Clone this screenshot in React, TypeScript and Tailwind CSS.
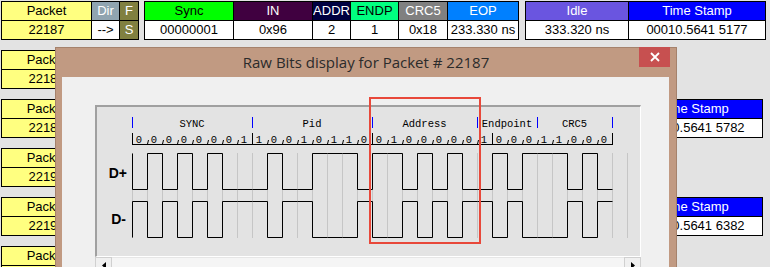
import React from "react";

type Col = { label: string; value: string; w: string; head: string; cell?: string };

const packetCols: Col[] = [
  { label: "Packet", value: "22187", w: "w-[89px]", head: "bg-[#ffff80] text-black", cell: "bg-[#ffff80] text-black" },
  { label: "Dir", value: "-->", w: "w-[27px]", head: "bg-[#90a4b0] text-white" },
  { label: "F", value: "S", w: "w-[18px]", head: "bg-[#808040] text-white", cell: "bg-[#808040] text-white" },
];

const tokenCols: Col[] = [
  { label: "Sync", value: "00000001", w: "w-[88px]", head: "bg-[#00ff00] text-black" },
  { label: "IN", value: "0x96", w: "w-[78px]", head: "bg-[#400040] text-white" },
  { label: "ADDR", value: "2", w: "w-[37px]", head: "bg-[#000040] text-white" },
  { label: "ENDP", value: "1", w: "w-[47px]", head: "bg-[#00ff80] text-black" },
  { label: "CRC5", value: "0x18", w: "w-[48px]", head: "bg-[#808080] text-white" },
  { label: "EOP", value: "233.330 ns", w: "w-[70px]", head: "bg-[#0080ff] text-white" },
];

const idleCols: Col[] = [
  { label: "Idle", value: "333.320 ns", w: "w-[102px]", head: "bg-[#6a55e0] text-white" },
  { label: "Time Stamp", value: "00010.5641 5177", w: "w-[136px]", head: "bg-[#0000ff] text-white" },
];

const lowerRows = [
  { packet: "22188" },
  { packet: "22189", stamp: "00010.5641 5782" },
  { packet: "22190" },
  { packet: "22191", stamp: "00010.5641 6382" },
  { packet: "22192" },
];

// bits as shown in the dialog, LSB first
const bits = [0, 0, 0, 0, 0, 0, 0, 1, 1, 0, 0, 1, 0, 1, 1, 0, 0, 1, 0, 0, 0, 0, 0, 1, 0, 0, 0, 1, 1, 0, 0, 0];
const X0 = 132;
const STEP = 15;
const fields = [
  { name: "SYNC", from: 0, to: 8 },
  { name: "Pid", from: 8, to: 16 },
  { name: "Address", from: 16, to: 23 },
  { name: "Endpoint", from: 23, to: 27 },
  { name: "CRC5", from: 27, to: 32 },
];

function Table({ cols }: { cols: Col[] }) {
  return (
    <div className="flex gap-px border border-black bg-black text-[13px] leading-[18px]">
      {cols.map((c) => (
        <div key={c.label} className={`flex flex-col gap-px ${c.w}`}>
          <div className={`h-[18px] overflow-hidden whitespace-nowrap text-center ${c.head}`}>{c.label}</div>
          <div className={`h-[18px] overflow-hidden whitespace-nowrap text-center ${c.cell ?? "bg-white text-black"}`}>
            {c.value}
          </div>
        </div>
      ))}
    </div>
  );
}

function levels() {
  let lvl = 1;
  return bits.map((b) => {
    if (b === 0) lvl = 1 - lvl;
    return lvl;
  });
}

function wavePath(hi: number, lo: number, invert: boolean) {
  const lv = levels();
  const y = (l: number) => ((invert ? 1 - l : l) ? hi : lo);
  let d = `M ${X0 + 0.5} ${invert ? lo : hi}`;
  lv.forEach((l, i) => {
    const x1 = X0 + STEP * i + 0.5;
    const x2 = X0 + STEP * (i + 1) + 0.5;
    d += ` L ${x1} ${y(l)} L ${x2} ${y(l)}`;
  });
  return d;
}

function BitGraph() {
  const mono = "'Liberation Mono', monospace";
  return (
    <svg width="543" height="149" viewBox="97 107 543 149" className="block">
      {Array.from({ length: 34 }, (_, k) => (
        <line key={k} x1={X0 + STEP * k + 0.5} x2={X0 + STEP * k + 0.5} y1={153} y2={238} stroke="#c6c6c6" />
      ))}
      {[X0, 252, 372, 477, 537, 612].map((x) => (
        <line key={x} x1={x + 0.5} x2={x + 0.5} y1={117} y2={128} stroke="#0000ff" />
      ))}
      {fields.map((f) => (
        <text
          key={f.name}
          x={X0 + ((f.from + f.to) / 2) * STEP}
          y={127}
          textAnchor="middle"
          fontSize="10.5"
          fontFamily={mono}
          fill="#000"
        >
          {f.name}
        </text>
      ))}
      <line x1={X0} x2={613} y1={144.5} y2={144.5} stroke="#000" />
      {Array.from({ length: 33 }, (_, i) => {
        const x = X0 + STEP * i + 0.5;
        const tall = i % 8 === 0;
        return <line key={i} x1={tall ? x : x + 1} x2={x} y1={tall ? 133 : 140} y2={144} stroke="#000" />;
      })}
      {bits.map((b, i) => (
        <text key={i} x={X0 + STEP * i + 7} y={143} textAnchor="middle" fontSize="10.5" fontFamily={mono} fill="#000">
          {b}
        </text>
      ))}
      <path d={wavePath(153.5, 189.5, false)} fill="none" stroke="#000" />
      <path d={wavePath(201.5, 237.5, true)} fill="none" stroke="#000" />
      <text x={127} y={178} textAnchor="end" fontSize="14" fontWeight="bold" fontFamily="'Liberation Sans', sans-serif">
        D+
      </text>
      <text x={126} y={223.5} textAnchor="end" fontSize="14" fontWeight="bold" fontFamily="'Liberation Sans', sans-serif">
        D-
      </text>
    </svg>
  );
}

function Arrow({ left }: { left?: boolean }) {
  return (
    <div className="flex h-[17px] w-[17px] items-center justify-center border border-[#d0d0d0] bg-[#f0f0f0]">
      <svg width="4" height="7" viewBox="0 0 4 7">
        <polygon points={left ? "4,0 4,7 0,3.5" : "0,0 0,7 4,3.5"} fill="#000" />
      </svg>
    </div>
  );
}

function Dialog() {
  return (
    <div className="absolute left-[55px] top-[47px] flex h-[240px] w-[622px] flex-col border border-[#a5826c] bg-[#c19a82]">
      <div className="relative flex h-[29px] items-center justify-center font-['Open_Sans',sans-serif] text-[15px] text-[#2b2b2b]">
        Raw Bits display for Packet # 22187
        <div className="absolute right-[6px] top-[-1px] flex h-[20px] w-[31px] items-center justify-center bg-[#c75050]">
          <svg width="10" height="10" viewBox="0 0 10 10">
            <path d="M1 1 L9 9 M9 1 L1 9" stroke="#fff" strokeWidth="1.8" />
          </svg>
        </div>
      </div>
      <div className="relative ml-[6px] mr-[7px] flex-1 bg-[#f0f0f0]">
        <div className="ml-[33px] mt-[28px] w-[546px]">
          <div className="border-b border-l-2 border-r border-t-2 border-b-white border-l-[#a0a0a0] border-r-white border-t-[#a0a0a0] bg-[#e3e3e3]">
            <BitGraph />
          </div>
          <div className="flex bg-[#f0f0f0]">
            <Arrow left />
            <div className="h-[17px] flex-1 border-y border-[#e6e6e6] bg-[#f5f5f5]" />
            <Arrow />
          </div>
        </div>
        <div className="absolute left-[307px] top-[20px] h-[147px] w-[112px] border-2 border-[#e8483a]" />
      </div>
    </div>
  );
}

export default function App() {
  return (
    <div className="relative h-[267px] w-[770px] overflow-hidden bg-[#e3e3e3] font-['Liberation_Sans',Arial,sans-serif]">
      <div className="flex flex-col gap-[10px] pl-px pt-px">
        <div className="flex">
          <Table cols={packetCols} />
          <div className="ml-[5px]">
            <Table cols={tokenCols} />
          </div>
          <div className="ml-[6px]">
            <Table cols={idleCols} />
          </div>
        </div>
        {lowerRows.map((r) => (
          <div key={r.packet} className="flex">
            <Table cols={[{ ...packetCols[0], value: r.packet }]} />
            {r.stamp && (
              <div className="ml-auto mr-[7px]">
                <Table
                  cols={[{ label: "Time Stamp", value: r.stamp, w: "w-[136px]", head: "bg-[#0000ff] text-white" }]}
                />
              </div>
            )}
          </div>
        ))}
      </div>
      <Dialog />
    </div>
  );
}
